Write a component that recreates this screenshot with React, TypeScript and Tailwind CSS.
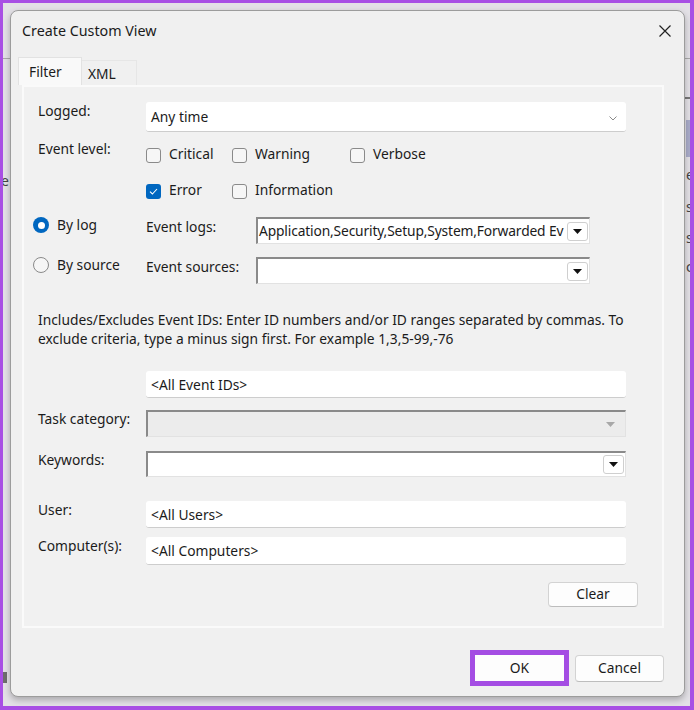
import React from 'react';

// Small down triangle used by the classic combo boxes
function Tri({ color = '#111' }: { color?: string }) {
  return (
    <svg width="9" height="5" viewBox="0 0 9 5">
      <path d="M0 0H9L4.5 5Z" fill={color} />
    </svg>
  );
}

function Combo({ width, text, disabled }: { width: string; text?: string; disabled?: boolean }) {
  return (
    <div
      className={`${width} h-full flex items-center border-t-2 border-l-2 border-t-[#8a8a8a] border-l-[#8a8a8a] border-r border-b border-r-[#e2e2e2] border-b-[#e2e2e2] ${
        disabled ? 'bg-[#ececec]' : 'bg-white'
      }`}
    >
      <span className="flex-1 pl-[1px] whitespace-nowrap overflow-hidden text-[13.8px] tracking-[-0.15px]">{text}</span>
      {disabled ? (
        <span className="w-[21px] mr-[4px] flex justify-center">
          <Tri color="#a8a8a8" />
        </span>
      ) : (
        <span className="w-[21px] h-[19px] mr-[1px] flex items-center justify-center bg-white border border-[#cfcfcf] rounded-[3px]">
          <Tri />
        </span>
      )}
    </div>
  );
}

function Check({ label, checked, width }: { label: string; checked?: boolean; width: string }) {
  return (
    <div className={`${width} flex items-center gap-[8px]`}>
      {checked ? (
        <span className="w-[15px] h-[15px] rounded-[3px] bg-[#0067c0] flex items-center justify-center">
          <svg width="9" height="7" viewBox="0 0 9 7">
            <path d="M1 3.6L3.4 6L8 1" fill="none" stroke="white" strokeWidth="1.1" />
          </svg>
        </span>
      ) : (
        <span className="w-[15px] h-[15px] rounded-[3px] border border-[#8a8a8a] bg-[#f6f6f6]" />
      )}
      <span className="text-[13.8px] -mt-[2px]">{label}</span>
    </div>
  );
}

function Radio({ label, on }: { label: string; on?: boolean }) {
  return (
    <div className="w-[113px] flex items-start gap-[8px]">
      {on ? (
        <span className="w-[16px] h-[16px] rounded-full bg-[#0067c0] flex items-center justify-center">
          <span className="w-[7px] h-[7px] rounded-full bg-white" />
        </span>
      ) : (
        <span className="w-[16px] h-[16px] rounded-full border border-[#8a8a8a] bg-[#f6f6f6]" />
      )}
      <span className="text-[13.8px] leading-[18px] -mt-[1px]">{label}</span>
    </div>
  );
}

function TextBox({ text, children }: { text?: string; children?: React.ReactNode }) {
  return (
    <div className="w-[480px] h-full flex items-center justify-between bg-white rounded-[3px] border-b border-[#cdcdcd] pl-[5px] pr-[9px]">
      <span className="text-[13.8px] pt-[2px]">{text}</span>
      {children}
    </div>
  );
}

const Label = ({ children }: { children: React.ReactNode }) => (
  <span className="w-[108px] text-[13.8px] leading-[18px]">{children}</span>
);

export default function App() {
  return (
    <div className="w-[694px] h-[710px] bg-[#a84fe4] pt-[3px] pl-[3px] pr-[4px] pb-[4px] font-['Noto_Sans',sans-serif] text-[#1b1b1b]">
      <div className="relative w-full h-full bg-[#e3e1e6] overflow-hidden pt-[7px] pl-[7px]">
        {/* window behind the dialog */}
        <span className="absolute left-0 top-[55px] w-[7px] h-px bg-[#a9a9a9]" />
        <span className="absolute left-[-2px] top-[167px] text-[14px] text-[#444]">e</span>
        <span className="absolute left-0 top-[669px] w-[4px] h-[11px] bg-[#6d6d6d]" />
        <span className="absolute left-[682px] top-[55px] w-[5px] h-px bg-[#a9a9a9]" />
        <span className="absolute left-[682px] top-[94px] w-[5px] h-[2px] bg-[#777]" />
        <span className="absolute left-[683px] top-[117px] w-[4px] h-[37px] bg-[#a9acc9]" />
        <span className="absolute left-[683px] top-[161px] text-[14px] text-[#444]">e</span>
        <span className="absolute left-[683px] top-[193px] text-[14px] text-[#444]">s</span>
        <span className="absolute left-[683px] top-[224px] text-[14px] text-[#444]">s</span>
        <span className="absolute left-[683px] top-[253px] text-[14px] text-[#444]">c</span>

        {/* dialog */}
        <div className="relative w-[675px] h-[687px] rounded-[8px] border border-[#9c9c9c] bg-[#f0f0f0] shadow-[0_3px_6px_rgba(0,0,0,0.25)]">
          {/* title bar */}
          <div className="h-[39px] flex items-center justify-between pl-[11px] pr-[13px]">
            <span className="text-[14.3px]">Create Custom View</span>
            <svg width="12" height="12" viewBox="0 0 12 12">
              <path d="M0.5 0.5L11.5 11.5M11.5 0.5L0.5 11.5" stroke="#222" strokeWidth="1.2" />
            </svg>
          </div>

          {/* tabs */}
          <div className="mt-[7px] ml-[7px] flex items-end h-[28px]">
            <div className="w-[64px] h-[28px] bg-[#f9f9f9] border border-b-0 border-[#e2e2e2] pl-[10px] text-[13.8px] leading-[28px]">
              Filter
            </div>
            <div className="w-[55px] h-[25px] border border-b-0 border-l-0 border-[#e6e6e6] pl-[6px] text-[13.8px] leading-[26px]">
              XML
            </div>
          </div>

          {/* filter panel */}
          <div className="ml-[11px] w-[642px] h-[543px] border-2 border-[#fafafa] bg-[#f1f1f1] pl-[14px]">
            <div className="mt-[15px] h-[30px] flex items-start">
              <Label>Logged:</Label>
              <TextBox text="Any time">
                <svg width="8" height="5" viewBox="0 0 8 5" className="mt-[3px]">
                  <path d="M0.5 0.5L4 4L7.5 0.5" fill="none" stroke="#8a8a8a" strokeWidth="1" />
                </svg>
              </TextBox>
            </div>

            <div className="mt-[8px] h-[30px] flex items-start">
              <Label>Event level:</Label>
              <div className="h-full flex items-center">
                <Check label="Critical" width="w-[86px]" />
                <Check label="Warning" width="w-[118px]" />
                <Check label="Verbose" width="w-[100px]" />
              </div>
            </div>

            <div className="mt-[6px] h-[30px] flex items-center pl-[108px]">
              <Check label="Error" checked width="w-[86px]" />
              <Check label="Information" width="w-[118px]" />
            </div>

            <div className="mt-[11px] h-[27px] flex items-start -ml-[5px]">
              <Radio label="By log" on />
              <span className="w-[110px] text-[13.8px] leading-[18px] pt-[1px]">Event logs:</span>
              <Combo width="w-[334px]" text="Application,Security,Setup,System,Forwarded Ev" />
            </div>

            <div className="mt-[13px] h-[27px] flex items-start -ml-[5px]">
              <Radio label="By source" />
              <span className="w-[110px] text-[13.8px] leading-[18px] pt-[1px]">Event sources:</span>
              <Combo width="w-[334px]" />
            </div>

            <p className="mt-[26px] text-[13.8px] leading-[19px] whitespace-nowrap">
              Includes/Excludes Event IDs: Enter ID numbers and/or ID ranges separated by commas. To
              <br />
              exclude criteria, type a minus sign first. For example 1,3,5-99,-76
            </p>

            <div className="mt-[23px] h-[27px] flex pl-[108px]">
              <TextBox text="<All Event IDs>" />
            </div>

            <div className="mt-[12px] h-[27px] flex items-start">
              <Label>Task category:</Label>
              <Combo width="w-[480px]" disabled />
            </div>

            <div className="mt-[14px] h-[26px] flex items-start">
              <Label>Keywords:</Label>
              <Combo width="w-[480px]" />
            </div>

            <div className="mt-[24px] h-[27px] flex items-start">
              <Label>User:</Label>
              <TextBox text="<All Users>" />
            </div>

            <div className="mt-[9px] h-[28px] flex items-start">
              <Label>Computer(s):</Label>
              <TextBox text="<All Computers>" />
            </div>

            <div className="mt-[17px] flex justify-end pr-[24px]">
              <button className="w-[90px] h-[25px] bg-[#fdfdfd] border border-[#d3d3d3] border-b-[#bdbdbd] rounded-[4px] text-[13.8px]">
                Clear
              </button>
            </div>
          </div>

          {/* dialog buttons */}
          <div className="mt-[22px] flex justify-end items-center gap-[6px] pr-[20px]">
            <div className="border-[5px] border-[#a44de3]">
              <button className="w-[89px] h-[26px] bg-[#fdfdfd] text-[13.8px] block">OK</button>
            </div>
            <button className="w-[89px] h-[27px] bg-[#fdfdfd] border border-[#d3d3d3] border-b-[#bdbdbd] rounded-[4px] text-[13.8px]">
              Cancel
            </button>
          </div>
        </div>
      </div>
    </div>
  );
}
